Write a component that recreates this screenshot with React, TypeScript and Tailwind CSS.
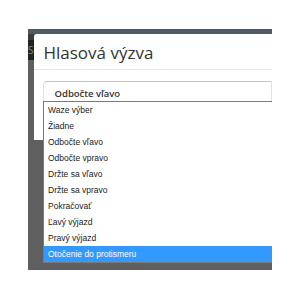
const options = [
  'Waze výber',
  'Žiadne',
  'Odbočte vľavo',
  'Odbočte vpravo',
  'Držte sa vľavo',
  'Držte sa vpravo',
  'Pokračovať',
  'Ľavý výjazd',
  'Pravý výjazd',
  'Otočenie do protismeru',
];

export default function App() {
  const selected = options.length - 1;

  return (
    <div className="w-[300px] h-[300px] bg-white pt-[29px] pl-[28px]" style={{ fontFamily: '"Open Sans", "Noto Sans", sans-serif' }}>
      <div className="relative w-[244px] h-[241px] overflow-hidden bg-[#5f5f5f]">
        <div className="h-[5px] bg-[#4d5c62]" />
        <div className="flex">
          <div className="w-[6px] flex flex-col">
            <div className="h-[6px] bg-[#3c3c3c]" />
            <div className="h-[20px] bg-[#222222] text-[10px] leading-[20px] text-[#888] overflow-hidden">S</div>
          </div>
          {/* modal */}
          <div className="w-[260px] h-[106px] bg-white rounded-tl-[3px]">
            <div className="h-[36px] border-b border-[#e5e5e5] pl-[10px] pt-[9px] text-[17px] leading-[20px] text-[#333]">
              Hlasová výzva
            </div>
            <div className="pl-[9px] pt-[11px]">
              <div className="h-[21px] border border-b-0 border-[#dde3e6] border-t-[#9fd0e3] rounded-tl-[4px] pl-[11px] pt-[4px] text-[9.5px] leading-[16px] text-[#333] font-semibold">
                Odbočte vľavo
              </div>
            </div>
          </div>
        </div>
        {/* open list */}
        <div className="absolute left-[15px] top-[72px] w-[240px] border border-[#7a7a7a] bg-white" style={{ fontFamily: '"Liberation Sans", Arial, sans-serif' }}>
          {options.map((o, i) => (
            <div
              key={o}
              className={
                i === selected
                  ? 'h-[16px] pl-[4px] text-[8.5px] leading-[16px] bg-[#3399ff] text-white'
                  : 'h-[16px] pl-[4px] text-[8.5px] leading-[16px] text-[#222]'
              }
            >
              {o}
            </div>
          ))}
        </div>
      </div>
    </div>
  );
}
